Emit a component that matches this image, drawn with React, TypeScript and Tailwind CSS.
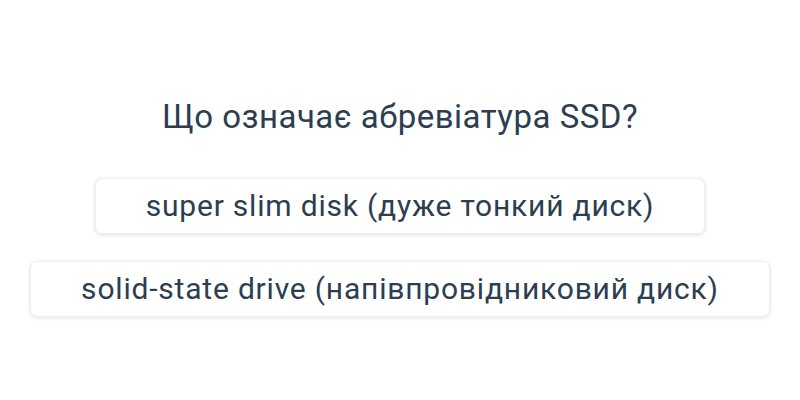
import React from 'react';

const options = [
    'super slim disk (дуже тонкий диск)',
    'solid-state drive (напівпровідниковий диск)',
];

const App: React.FC = () => {
    return (
        <div
            className="w-[800px] h-[400px] bg-white flex flex-col items-center pt-[94px] text-[#2c3e50]"
            style={{ fontFamily: 'Roboto, "Noto Sans", sans-serif' }}
        >
            <h1 className="text-[33px] leading-[46px] tracking-[0.5px] font-normal">Що означає абревіатура SSD?</h1>
            <div className="mt-[38px] flex flex-col items-center gap-[27px]">
                {options.map((option) => (
                    <button
                        key={option}
                        className="h-[56px] px-[50px] text-[30px] tracking-[0.8px] leading-none bg-white border border-[#efefef] rounded-[7px] shadow-[0_1px_4px_rgba(0,0,0,0.12)]"
                    >
                        {option}
                    </button>
                ))}
            </div>
        </div>
    );
};

export default App;
